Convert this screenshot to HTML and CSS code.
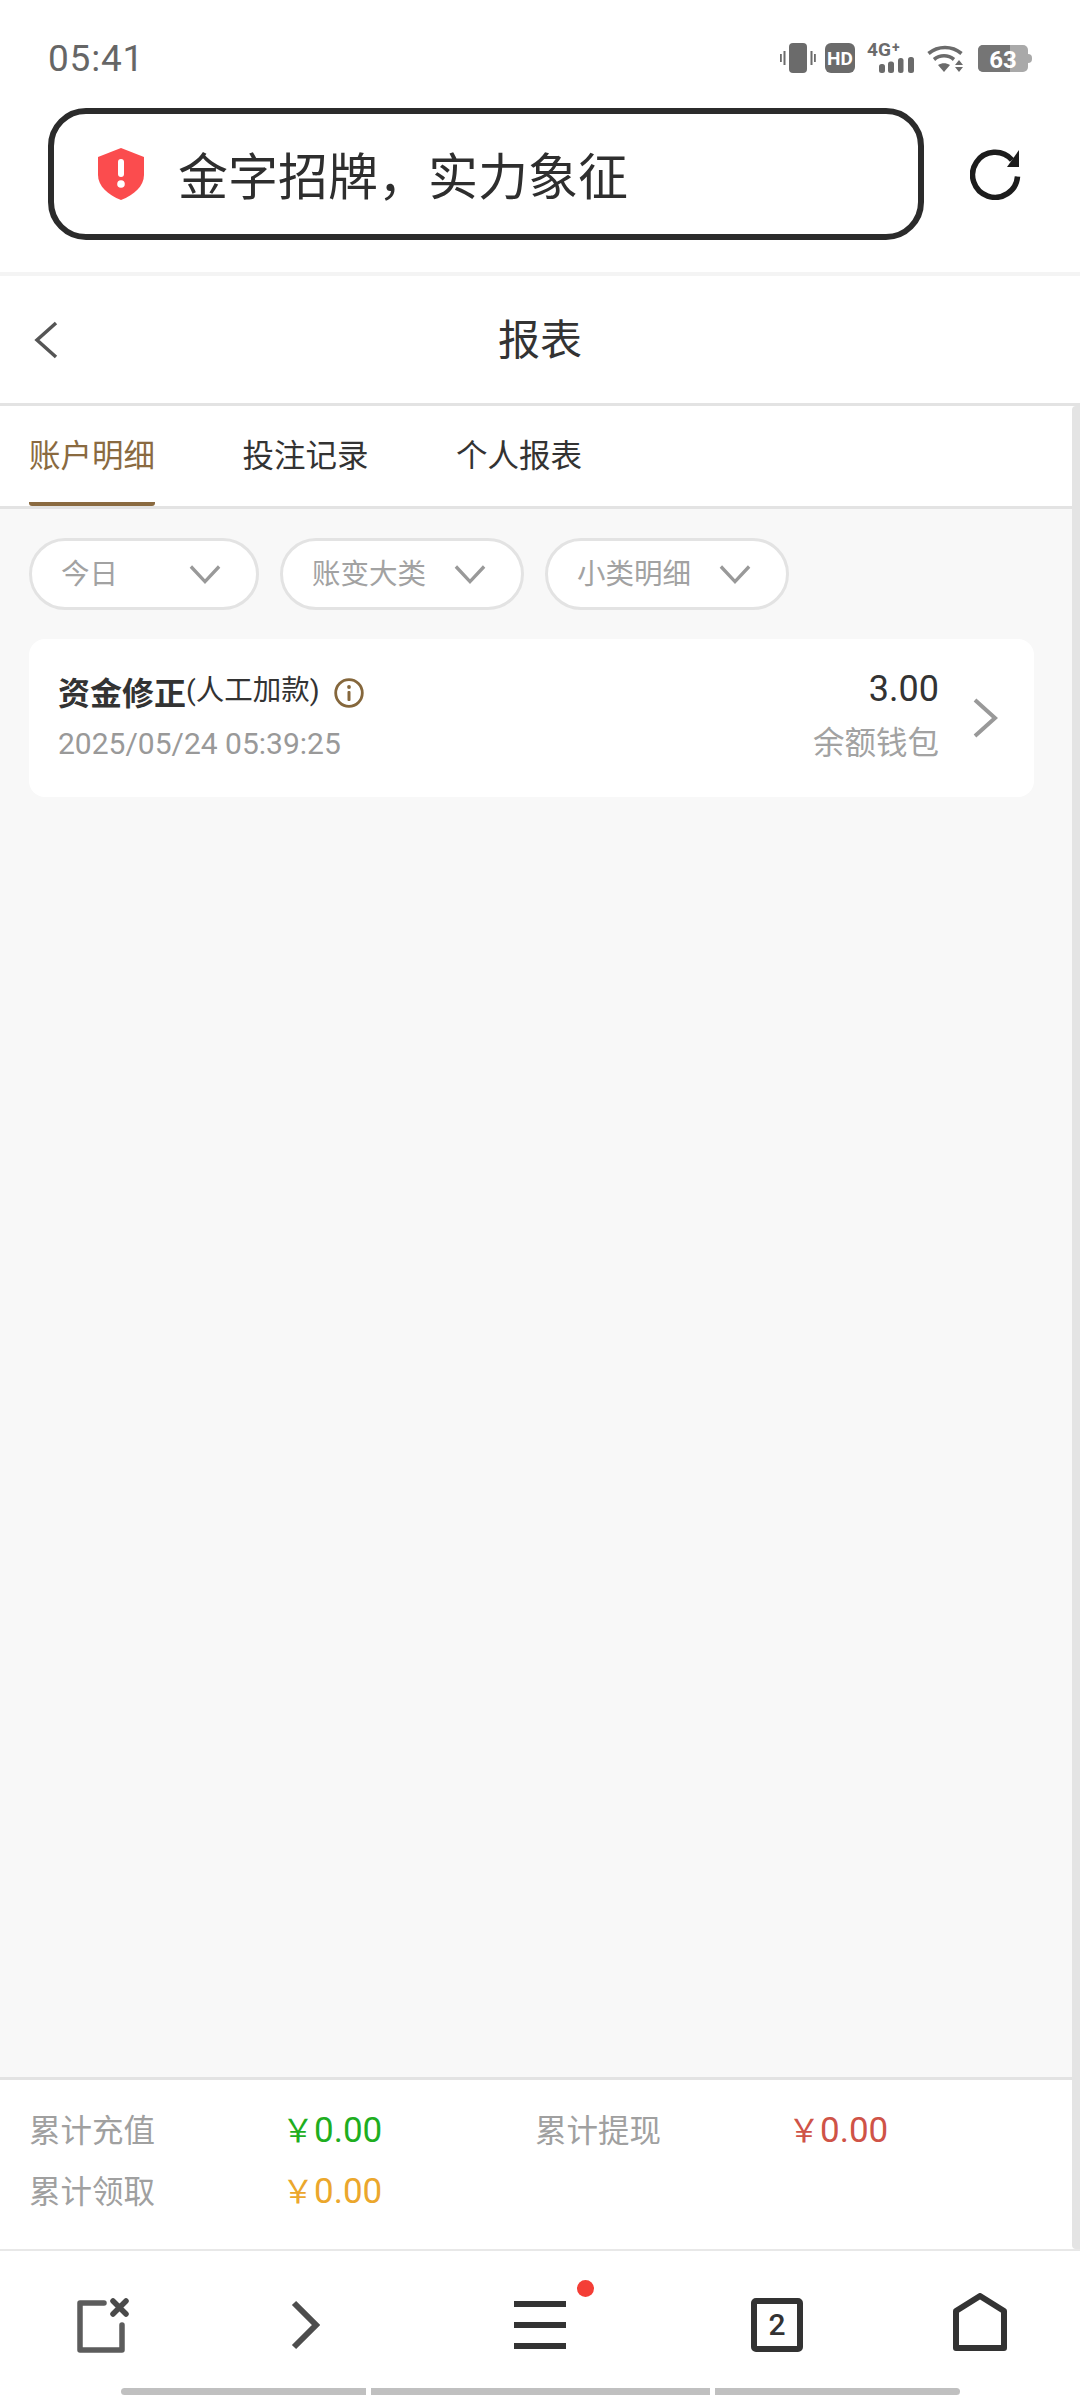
FILE: index.html
```html
<!DOCTYPE html>
<html lang="zh-CN">
<head>
<meta charset="utf-8">
<title>报表</title>
<link rel="stylesheet" href="styles.css">
</head>
<body>
<div class="phone">
  <header class="top">
    <div class="status">
      <span class="time">05:41</span>
      <div class="status-icons">
        <svg class="si" width="36" height="30" viewBox="0 0 36 30"><rect x="9" y="0" width="18" height="30" rx="4" fill="#6b6b6b"/><rect x="3.5" y="8" width="2" height="14" fill="#6b6b6b"/><rect x="0" y="11" width="1.8" height="8" fill="#6b6b6b"/><rect x="30.5" y="8" width="2" height="14" fill="#6b6b6b"/><rect x="34" y="11" width="1.8" height="8" fill="#6b6b6b"/></svg>
        <svg class="si si-b" width="30" height="30" viewBox="0 0 30 30"><rect width="30" height="30" rx="6" fill="#6b6b6b"/><text x="15" y="21.500" text-anchor="middle" class="si-hd">HD</text></svg>
        <svg class="si si-c" width="47" height="36" viewBox="0 -6 47 36"><text x="0" y="12.5" class="si-4g">4G</text><text x="25" y="9" class="si-plus">+</text><rect x="12" y="21" width="6" height="9" rx="2.5" fill="#6b6b6b"/><rect x="21" y="18.5" width="6" height="11.5" rx="2.5" fill="#6b6b6b"/><rect x="31" y="15" width="5.500" height="15" rx="2.5" fill="#6b6b6b"/><rect x="41" y="14" width="6" height="16" rx="2.5" fill="#6b6b6b"/></svg>
        <svg class="si si-d" width="37" height="28" viewBox="0 0 37 28"><path d="M1.5 8.5C11 .5 25 .5 34.500 8.500" fill="none" stroke="#6b6b6b" stroke-width="3.600"/><path d="M7 14.500C13 9.500 21 9.500 27 14.500" fill="none" stroke="#6b6b6b" stroke-width="3.600"/><path d="M11 20C15 17.500 19 17.500 23 20L17 27Z" fill="#6b6b6b"/><path d="M32 15l4 5h-8zM32 27l-4-5h8z" fill="#6b6b6b"/></svg>
        <svg class="si si-e" width="54" height="28" viewBox="0 0 54 28"><rect width="50" height="27" rx="5" fill="#a9a9a9"/><path d="M5 0H32V27H5a5 5 0 0 1-5-5V5a5 5 0 0 1 5-5z" fill="#757575"/><path d="M50 9a4 4 0 0 1 4 4v1a4 4 0 0 1-4 4z" fill="#a9a9a9"/><text x="25" y="22.500" text-anchor="middle" class="si-bat">63</text></svg>
      </div>
    </div>
    <div class="url-row">
      <div class="url-bar">
        <svg class="shield" width="46" height="52" viewBox="0 0 46 52"><path d="M23 0L46 9V27C46 38 36 47 23 52C10 47 0 38 0 27V9Z" fill="#fb4c4e"/><rect x="20" y="11" width="6" height="18" rx="3" fill="#fff"/><circle cx="23" cy="36" r="3.800" fill="#fff"/></svg>
        <span class="url-text">金字招牌，实力象征</span>
      </div>
      <svg class="reload" width="52" height="52" viewBox="0 0 52 52"><path d="M42 12A22.500 22.500 0 1 0 47.500 28.500" fill="none" stroke="#1c1c1c" stroke-width="5.500"/><path d="M49 2V19H37Z" fill="#1c1c1c"/></svg>
    </div>
  </header>

  <div class="titlebar">
    <svg class="back" width="26" height="38" viewBox="0 0 26 38"><path d="M23 2L4 19L23 36" fill="none" stroke="#555" stroke-width="3.500"/></svg>
    <h1 class="title">报表</h1>
  </div>

  <div class="main">
    <nav class="tabs">
      <a class="tab tab-active">账户明细</a>
      <a class="tab">投注记录</a>
      <a class="tab">个人报表</a>
    </nav>
    <div class="filters">
      <div class="pill pill-wide"><span>今日</span><svg width="32" height="21" viewBox="0 0 34 21"><path d="M2 2L17 18L32 2" fill="none" stroke="#999" stroke-width="3.500"/></svg></div>
      <div class="pill"><span>账变大类</span><svg width="32" height="21" viewBox="0 0 34 21"><path d="M2 2L17 18L32 2" fill="none" stroke="#999" stroke-width="3.500"/></svg></div>
      <div class="pill"><span>小类明细</span><svg width="32" height="21" viewBox="0 0 34 21"><path d="M2 2L17 18L32 2" fill="none" stroke="#999" stroke-width="3.500"/></svg></div>
    </div>
    <div class="list">
      <article class="card">
        <div class="card-left">
          <div class="card-title"><b>资金修正</b><span class="paren">(人工加款)</span>
            <svg class="info" width="30" height="30" viewBox="0 0 30 30"><circle cx="15" cy="15" r="13.300" fill="none" stroke="#85673c" stroke-width="2.800"/><circle cx="15" cy="9" r="1.900" fill="#85673c"/><rect x="13.500" y="13" width="3" height="10" rx="1" fill="#85673c"/></svg>
          </div>
          <div class="card-date">2025/05/24 05:39:25</div>
        </div>
        <div class="card-right">
          <div class="card-amount">3.00</div>
          <div class="card-wallet">余额钱包</div>
        </div>
        <svg class="card-arrow" width="27" height="40" viewBox="0 0 27 40"><path d="M3 2L23 20L3 38" fill="none" stroke="#999" stroke-width="4"/></svg>
      </article>
    </div>
    <div class="summary">
      <div class="sum-cell"><span class="sum-label">累计充值</span><span class="sum-value green"><i>￥</i>0.00</span></div>
      <div class="sum-cell"><span class="sum-label">累计提现</span><span class="sum-value red"><i>￥</i>0.00</span></div>
      <div class="sum-cell"><span class="sum-label">累计领取</span><span class="sum-value orange"><i>￥</i>0.00</span></div>
    </div>
    <div class="scrollbar"></div>
  </div>

  <footer class="bottom">
    <div class="nav">
      <svg class="nav-close" width="52" height="56" viewBox="0 0 52 56"><path d="M27 6H3V53H45V28" fill="none" stroke="#5c5c5c" stroke-width="5.500" stroke-linejoin="round" stroke-linecap="round"/><path d="M36 4L49 17M49 4L36 17" fill="none" stroke="#4a4a4a" stroke-width="5.500" stroke-linecap="round"/></svg>
      <svg class="nav-forward" width="30" height="50" viewBox="0 0 30 50"><path d="M4 3L26 25L4 47" fill="none" stroke="#4d4d4d" stroke-width="6"/></svg>
      <div class="menu">
        <svg width="52" height="50" viewBox="0 0 52 50"><path d="M0 4H52M0 25H52M0 46H52" fill="none" stroke="#333" stroke-width="6"/></svg>
        <span class="dot"></span>
      </div>
      <div class="tabs-btn">2</div>
      <svg class="nav-home" width="54" height="58" viewBox="0 0 54 58"><path d="M27 3L51 18V55H3V18Z" fill="none" stroke="#333" stroke-width="6" stroke-linejoin="round"/></svg>
    </div>
    <div class="indicator"><span class="seg seg-a"></span><span class="seg seg-b"></span><span class="seg seg-c"></span></div>
  </footer>
</div>
</body>
</html>
```
FILE: styles.css
```css
* { box-sizing: border-box; }
html, body { margin: 0; padding: 0; background: #fff; }
body { font-family: Roboto, "Noto Sans CJK SC", sans-serif; color: #333; }
.phone { width: 1080px; height: 2400px; display: flex; flex-direction: column; overflow: hidden; }

.top { height: 276px; flex: none; background: #fff; border-bottom: 4px solid #f4f4f4; }
.status { height: 108px; padding: 0 48px; display: flex; justify-content: space-between; align-items: center; }
.time { font-size: 37px; color: #666; letter-spacing: 0.8px; margin-top: 8px; }
.status-icons { display: flex; align-items: flex-end; margin-top: 2px; }
.si { display: block; }
.si-b { margin-left: 9px; }
.si-c { margin-left: 12px; }
.si-d { margin-left: 13px; }
.si-e { margin-left: 14px; }
.si-hd { font: 700 19px Roboto, sans-serif; fill: #fff; }
.si-4g { font: 700 19px Roboto, sans-serif; fill: #6b6b6b; }
.si-plus { font: 700 14px Roboto, sans-serif; fill: #6b6b6b; }
.si-bat { font: 700 24px Roboto, sans-serif; fill: #fff; }

.url-row { display: flex; align-items: center; padding-left: 48px; }
.url-bar { width: 876px; height: 132px; border: 6px solid #2b2b2b; border-radius: 38px; display: flex; align-items: center; padding-left: 44px; gap: 34px; }
.url-text { font-size: 50px; line-height: 60px; color: #2e2e2e; font-family: "Noto Sans CJK SC", sans-serif; margin-bottom: 3px; }
.shield { display: block; }
.reload { display: block; margin-left: 46px; }

.titlebar { height: 130px; flex: none; background: #fff; border-bottom: 3px solid #e3e3e3; display: flex; align-items: center; justify-content: center; position: relative; }
.title { margin: 0 0 6px; font-size: 42px; font-weight: 400; color: #333; font-family: "Noto Sans CJK SC", sans-serif; }
.back { position: absolute; left: 33px; top: 45px; }

.main { flex: 1; position: relative; background: #f8f8f8; display: flex; flex-direction: column; min-height: 0; border-bottom: 2px solid #e8e8e8; }
.tabs { height: 103px; flex: none; background: #fff; border-bottom: 3px solid #e3e3e3; display: flex; gap: 87.5px; padding-left: 29px; }
.tab { font-size: 31.5px; line-height: 94px; height: 100px; color: #333; font-family: "Noto Sans CJK SC", sans-serif; position: relative; }
.tab-active { color: #8a6a40; border-bottom: 4px solid #8a6a40; border-radius: 0 0 3px 3px; }

.filters { display: flex; gap: 21px; padding: 29px 0 0 29px; flex: none; }
.pill { height: 72px; border: 3px solid #e3e3e3; border-radius: 36px; background: #fff; display: flex; align-items: center; justify-content: space-between; padding: 0 35px 0 29px; width: 244px; font-size: 28.5px; color: #a2a2a2; font-family: "Noto Sans CJK SC", sans-serif; }
.pill span { margin-bottom: 5px; }
.pill-wide { width: 230px; }
.pill svg { display: block; margin-top: 1px; }

.list { flex: 1; padding: 29px 46px 0 29px; min-height: 0; }
.card { height: 158px; background: #fff; border-radius: 16px; display: flex; align-items: center; padding: 0 35px 0 29px; }
.card-left { flex: 1; display: flex; flex-direction: column; gap: 6px; }
.card-title { height: 46px; padding-bottom: 8px; display: flex; align-items: center; font-family: "Noto Sans CJK SC", sans-serif; font-size: 32px; line-height: 38px; color: #333; }
.card-title b { font-weight: 700; }
.paren { font-size: 28.5px; font-family: Roboto, "Noto Sans CJK SC", sans-serif; }
.info { margin: 4px 0 0 14px; display: block; }
.card-date { font-size: 30px; line-height: 40px; color: #999; }
.card-right { text-align: right; display: flex; flex-direction: column; gap: 7px; margin-bottom: 7px; }
.card-amount { font-size: 36px; line-height: 44px; color: #333; }
.card-wallet { font-size: 31.5px; line-height: 44px; color: #a2a2a2; font-family: "Noto Sans CJK SC", sans-serif; }
.card-arrow { margin-left: 33px; display: block; }

.summary { flex: none; height: 172px; background: #fff; border-top: 3px solid #e3e3e3; padding: 17px 0 0 29px; display: grid; grid-template-columns: 506px 506px; grid-auto-rows: 61px; }
.sum-cell { display: flex; align-items: center; }
.sum-label { width: 259px; font-size: 31.5px; color: #a0a0a0; font-family: "Noto Sans CJK SC", sans-serif; }
.sum-value { font-size: 35px; }
.sum-value i { font-style: normal; font-size: 32px; font-family: "Noto Sans CJK SC", sans-serif; margin-left: -6px; }
.green { color: #1fae1f; }
.red { color: #cf5347; }
.orange { color: #eba72c; }
.scrollbar { position: absolute; right: 0; top: 0; bottom: 0; width: 8px; background: #e4e4e4; border-radius: 4px 0 0 4px; }

.bottom { height: 149px; flex: none; background: #fff; display: flex; flex-direction: column; }
.nav { height: 137px; padding: 10px 0 0 77px; display: flex; align-items: center; }
.nav-close, .nav-forward, .nav-home { display: block; flex: none; }
.nav-forward { margin-left: 161px; }
.menu { position: relative; width: 52px; height: 50px; margin-left: 194px; flex: none; }
.menu svg { display: block; }
.dot { position: absolute; left: 63px; top: -20px; width: 17px; height: 17px; border-radius: 50%; background: #f43e36; }
.tabs-btn { width: 52px; height: 54px; flex: none; margin-left: 185px; border: 6px solid #333; border-radius: 5px; display: flex; align-items: center; justify-content: center; font-size: 30px; font-weight: 500; color: #333; line-height: 1; }
.nav-home { margin: -6px 0 0 150px; }
.indicator { display: flex; gap: 5px; padding-left: 121px; }
.seg { height: 7px; background: #c0c0c0; }
.seg-a { width: 245px; border-radius: 4px 0 0 4px; }
.seg-b { width: 339px; }
.seg-c { width: 245px; border-radius: 0 4px 4px 0; }
```
